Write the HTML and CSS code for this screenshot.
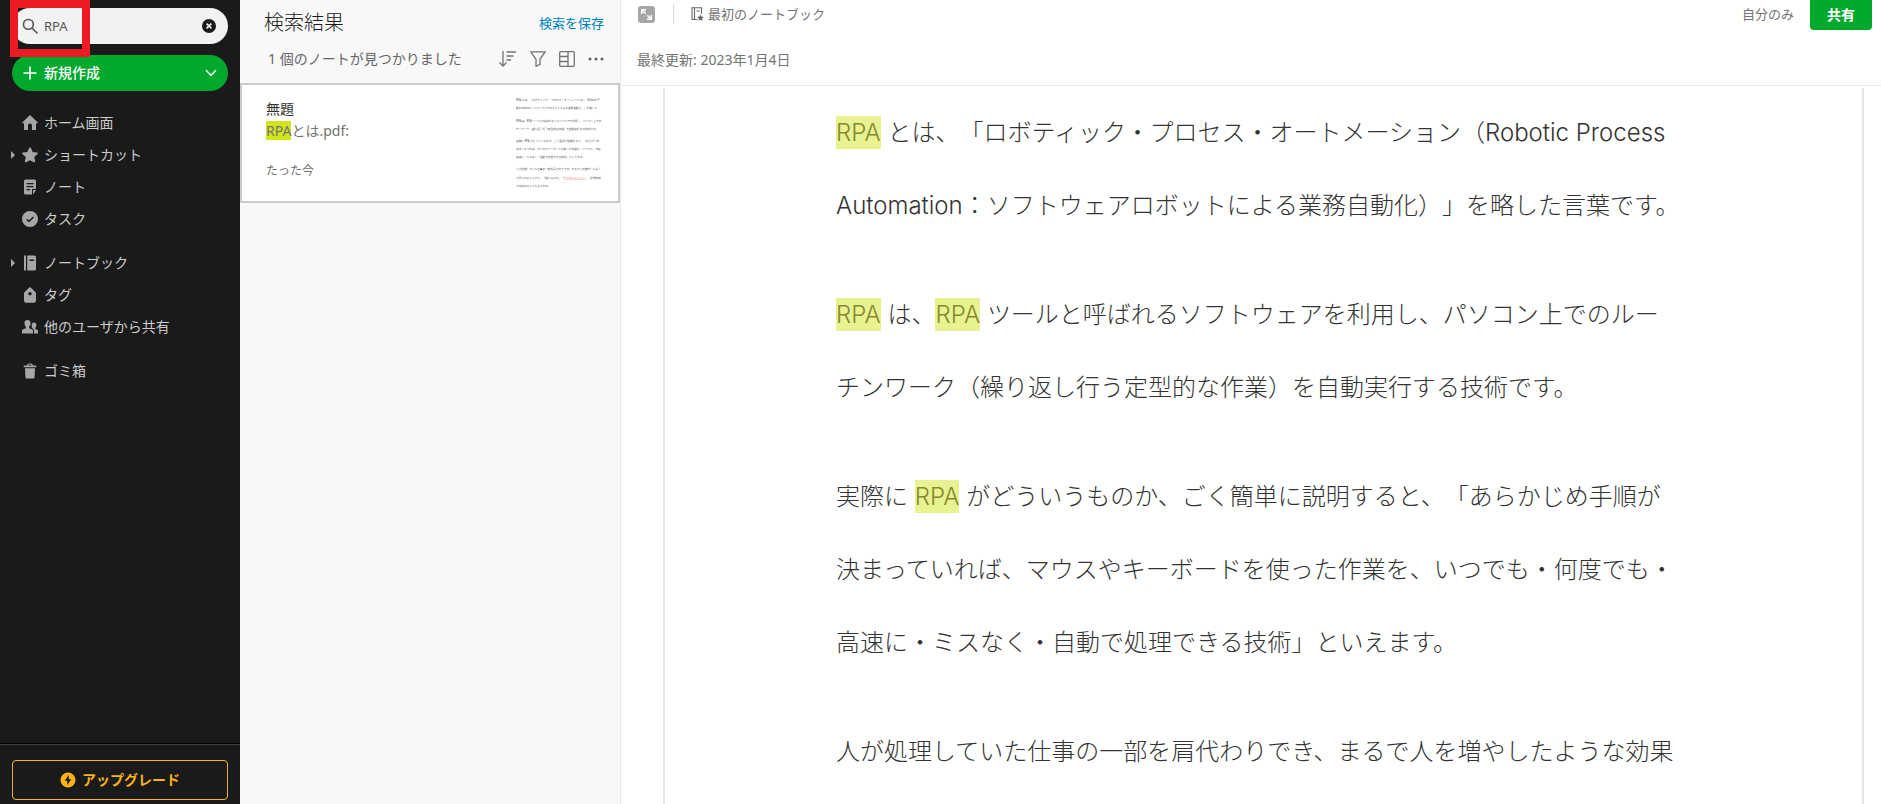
FILE: index.html
```html
<!DOCTYPE html>
<html lang="ja">
<head>
<meta charset="utf-8">
<title>検索結果</title>
<link rel="stylesheet" href="styles.css">
</head>
<body>
<div class="app">
  <aside class="sidebar">
    <div class="search">
      <svg class="search-icon" viewBox="0 0 16 16" width="16" height="16" fill="none" stroke="#555" stroke-width="1.6" stroke-linecap="round"><circle cx="6.4" cy="6.4" r="4.9"/><path d="M10 10l5 5"/></svg>
      <input class="search-input" type="text" value="RPA" aria-label="検索">
      <button class="search-clear" type="button" aria-label="クリア"><svg viewBox="0 0 14 14" width="14" height="14"><circle cx="7" cy="7" r="7" fill="#1a1a1a"/><path d="M4.6 4.6l4.8 4.8M9.4 4.6L4.6 9.4" stroke="#f2f2f2" stroke-width="1.6"/></svg></button>
      <div class="marker"></div>
    </div>
    <button class="new-button" type="button">
      <svg viewBox="0 0 14 14" width="14" height="14" stroke="#fff" stroke-width="1.7"><path d="M7 .5v13M.5 7h13"/></svg>
      <span class="new-label">新規作成</span>
      <svg viewBox="0 0 12 8" width="12" height="8" fill="none" stroke="#fff" stroke-width="1.5"><path d="M1 1.2l5 5 5-5"/></svg>
    </button>
    <nav class="nav">
      <div class="nav-group">
        <a class="nav-item" href="#"><span class="caret"></span><svg class="nav-icon" viewBox="0 0 16 16"><path d="M8 0L.2 7.4c-.3.4-.1.8.3.8H2V14.400c0 .4.2.6.6.6H6v-4.500a2 2 0 0 1 4 0V15h3.400c.4 0 .6-.2.6-.6V8.200h1.500c.4 0 .6-.4.3-.8z"/></svg>ホーム画面</a>
        <a class="nav-item" href="#"><span class="caret caret-on"></span><svg class="nav-icon" viewBox="0 0 16 16"><path stroke="#a6a6a6" stroke-width="1.6" stroke-linejoin="round" d="M8 1.200l2.100 4.500 4.900.6-3.600 3.400.9 4.900L8 12.200l-4.300 2.400.9-4.900L1 6.300l4.900-.6z"/></svg>ショートカット</a>
        <a class="nav-item" href="#"><span class="caret"></span><svg class="nav-icon" viewBox="0 0 16 16"><path fill-rule="evenodd" d="M3.500.5h9A1.500 1.500 0 0 1 14 2v8h-4v5.500H3.500A1.500 1.500 0 0 1 2 14V2A1.500 1.500 0 0 1 3.500.5zM4.500 4v1.200h7V4zm0 3v1.200h7V7zm0 3v1.200h3.500V10z"/><path d="M11 11h3l-3 4.500z"/></svg>ノート</a>
        <a class="nav-item" href="#"><span class="caret"></span><svg class="nav-icon" viewBox="0 0 16 16"><circle cx="8" cy="8" r="8"/><path d="M4.700 8.200l2.300 2.300 4.400-4.600" fill="none" stroke="#1a1a1a" stroke-width="1.500"/></svg>タスク</a>
      </div>
      <div class="nav-group">
        <a class="nav-item" href="#"><span class="caret caret-on"></span><svg class="nav-icon" viewBox="0 0 16 16"><path d="M2 .5h2v15H2z"/><path fill-rule="evenodd" d="M5.200.5h7.300A1.500 1.500 0 0 1 14 2v12a1.500 1.500 0 0 1-1.500 1.500H5.200zM7.500 4.500V6h4.500V4.500z"/></svg>ノートブック</a>
        <a class="nav-item" href="#"><span class="caret"></span><svg class="nav-icon" viewBox="0 0 16 16"><path fill-rule="evenodd" d="M7 .7a1.500 1.500 0 0 1 2 0l4.300 4.200c.4.400.7 1 .7 1.600v7.200a2 2 0 0 1-2 2H4a2 2 0 0 1-2-2V6.500c0-.6.300-1.200.7-1.600zM8 5a1.700 1.700 0 1 0 0 3.400A1.700 1.700 0 0 0 8 5z"/></svg>タグ</a>
        <a class="nav-item" href="#"><span class="caret"></span><svg class="nav-icon" viewBox="0 0 16 16"><path d="M5.500 1a3 3.200 0 0 1 3 3.300c0 1.500-.6 2.800-1.300 3.500v1.400l3 1.200c.6.300.8.800.8 1.400V14.500H0v-2.700c0-.6.300-1.100.8-1.400l3-1.200V7.800C3 7.100 2.500 5.800 2.500 4.300A3 3.200 0 0 1 5.500 1z"/><path d="M12 3.500a2.400 2.600 0 0 1 2.400 2.600c0 1.200-.5 2.200-1.100 2.800v1.100l2.200 1c.4.200.5.600.5 1v2.500h-4v-3c0-.9-.4-1.600-1.200-2L9.700 9c-.1-.4.1-.8.4-1.100-.3-.6-.5-1.200-.5-1.800A2.400 2.600 0 0 1 12 3.500z"/></svg>他のユーザから共有</a>
      </div>
      <div class="nav-group">
        <a class="nav-item" href="#"><span class="caret"></span><svg class="nav-icon" viewBox="0 0 16 16"><path fill-rule="evenodd" d="M5 2.500C5 1 6 .4 8 .4s3 .6 3 2.100h3.300v1.700H1.700V2.500zM6.400 2.500h3.200c0-.6-.6-.9-1.600-.9s-1.600.3-1.600.9z"/><path d="M3 5.200h10l-.4 9a1.500 1.500 0 0 1-1.500 1.300H4.900a1.500 1.500 0 0 1-1.500-1.300z"/></svg>ゴミ箱</a>
      </div>
    </nav>
    <div class="sidebar-footer">
      <button class="upgrade" type="button"><svg viewBox="0 0 16 16" width="16" height="16"><circle cx="8" cy="8" r="7.500" fill="#fcb116"/><path d="M8.800 3L4.700 8.800h2.600V13l4-5.800H8.800z" fill="#1a1a1a"/></svg>アップグレード</button>
    </div>
  </aside>

  <section class="results">
    <header class="results-head">
      <div class="results-row">
        <h1 class="results-title">検索結果</h1>
        <a class="save-link" href="#">検索を保存</a>
      </div>
      <div class="results-row">
        <p class="results-count">1 個のノートが見つかりました</p>
        <div class="tools">
          <button class="tool" type="button" aria-label="並べ替え"><svg viewBox="0 0 18 16" width="18" height="16"><path d="M4 0v15M.5 11.500L4 15l3.500-3.500M7.500 1H17M7.500 5h7M7.500 9h4.500"/></svg></button>
          <button class="tool" type="button" aria-label="フィルタ"><svg viewBox="0 0 16 16" width="16" height="16"><path d="M.8.8h14.400L10 8.300v5l-4 2v-7z"/></svg></button>
          <button class="tool" type="button" aria-label="表示"><svg viewBox="0 0 16 16" width="16" height="16"><rect x=".7" y=".7" width="14.600" height="14.600" rx="1"/><path d="M9 1v14M1 5.500h8M1 10.500h8"/></svg></button>
          <button class="tool" type="button" aria-label="その他"><svg viewBox="0 0 16 16" width="16" height="16"><g fill="#666" stroke="none"><circle cx="2" cy="8" r="1.600"/><circle cx="8" cy="8" r="1.600"/><circle cx="14" cy="8" r="1.600"/></g></svg></button>
        </div>
      </div>
    </header>
    <article class="card">
      <div class="card-text">
        <h2 class="card-title">無題</h2>
        <p class="card-snippet"><mark class="card-mark">RPA</mark>とは.pdf:</p>
        <p class="card-time">たった今</p>
      </div>
      <svg class="thumb" viewBox="0 0 792 855" width="88" height="95" aria-hidden="true">
        <text x="0" y="39">RPA とは、「ロボティック・プロセス・オートメーション（Robotic P</text>
        <text x="0" y="112">Automation：ソフトウェアロボットによる業務自動化）」を略した</text>
        <text x="0" y="221">RPA は、RPA ツールと呼ばれるソフトウェアを利用し、パソコン上での</text>
        <text x="0" y="294">チンワーク（繰り返し行う定型的な作業）を自動実行する技術です。</text>
        <text x="0" y="406">実際に RPA がどういうものか、ごく簡単に説明すると、「あらかじめ</text>
        <text x="0" y="479">決まっていれば、マウスやキーボードを使った作業を、いつでも・何度</text>
        <text x="0" y="552">高速に・ミスなく・自動で処理できる技術」といえます。</text>
        <text x="0" y="661">人が処理していた仕事の一部を肩代わりでき、まるで人を増やしたよう</text>
        <text x="0" y="734">が得られることから、「動けるロボ」「<tspan class="thumb-link">デジタルレイバー</tspan>」（仮想知的</text>
        <text x="0" y="807">で呼ばれることもあります。</text>
      </svg>
    </article>
  </section>

  <main class="editor">
    <header class="editor-head">
      <div class="editor-bar">
        <button class="expand" type="button" aria-label="展開"><svg viewBox="0 0 17 17" width="17" height="17"><rect width="17" height="17" rx="3" fill="#a6a6a6"/><g fill="none" stroke="#fff" stroke-width="1.500"><path d="M3.700 8V3.700H8M3.900 3.900l3.800 3.800M13.300 9v4.300H9M13.100 13.100L9.300 9.300"/></g></svg></button>
        <span class="divider"></span>
        <a class="notebook" href="#"><svg viewBox="0 0 13 14" width="13" height="14"><path d="M6.500 12.500H1V.8h9.500v6M3.500.8v11.700M5.500 4h3" fill="none" stroke="#666" stroke-width="1.100"/><path d="M9.500 7.500l1 2.100 2.300.3-1.700 1.600.4 2.300-2-1.100-2 1.100.4-2.300-1.700-1.600 2.300-.3z" fill="#666"/></svg>最初のノートブック</a>
        <span class="access">自分のみ</span>
      </div>
      <button class="share" type="button">共有</button>
      <p class="updated">最終更新: 2023年1月4日</p>
    </header>
    <div class="page">
      <p class="para"><mark class="hit">RPA</mark> とは、「ロボティック・プロセス・オートメーション（Robotic Process<br>Automation：ソフトウェアロボットによる業務自動化）」を略した言葉です。</p>
      <p class="para"><mark class="hit">RPA</mark> は、<mark class="hit">RPA</mark> ツールと呼ばれるソフトウェアを利用し、パソコン上でのルー<br>チンワーク（繰り返し行う定型的な作業）を自動実行する技術です。</p>
      <p class="para">実際に <mark class="hit">RPA</mark> がどういうものか、ごく簡単に説明すると、「あらかじめ手順が<br>決まっていれば、マウスやキーボードを使った作業を、いつでも・何度でも・<br>高速に・ミスなく・自動で処理できる技術」といえます。</p>
      <p class="para">人が処理していた仕事の一部を肩代わりでき、まるで人を増やしたような効果</p>
    </div>
  </main>
</div>
</body>
</html>
```
FILE: styles.css
```css
* { box-sizing: border-box; }
body, h1, h2, p { margin: 0; }
body {
  font-family: "Noto Sans", "Noto Sans CJK JP", sans-serif;
  font-size: 14px;
  line-height: 20px;
  color: #333;
  text-spacing-trim: space-all;
}
button { font: inherit; border: 0; padding: 0; background: none; }
a { color: inherit; text-decoration: none; }
svg { display: block; flex: none; }

.app { display: flex; height: 100vh; overflow: hidden; }

.sidebar {
  display: flex;
  flex-direction: column;
  flex: none;
  width: 240px;
  padding-top: 8px;
  background: #1a1a1a;
}
.search {
  position: relative;
  display: flex;
  align-items: center;
  height: 36px;
  margin: 0 12px;
  padding: 0 12px 0 10px;
  border-radius: 18px;
  background: #f2f2f2;
}
.search-input {
  flex: 1;
  min-width: 0;
  margin-left: 6px;
  padding: 0;
  border: 0;
  background: none;
  font: inherit;
  font-size: 13px;
  color: #555;
}
.marker {
  position: absolute;
  top: -8px;
  left: -2px;
  width: 80px;
  height: 57px;
  border: 8px solid #ed1c24;
  pointer-events: none;
}
.new-button {
  display: flex;
  align-items: center;
  gap: 7px;
  height: 36px;
  margin: 11px 12px 0;
  padding: 0 11px;
  border-radius: 18px;
  background: #00a82d;
  color: #fff;
  font-weight: 500;
}
.new-label { flex: 1; text-align: left; }

.nav { flex: 1; display: flex; flex-direction: column; gap: 12px; margin-top: 16px; }
.nav-item {
  display: flex;
  align-items: center;
  height: 32px;
  padding-left: 11px;
  color: #ccc;
}
.nav-icon { width: 16px; height: 16px; margin-right: 6px; fill: #a6a6a6; }
.caret {
  margin-right: 7px;
  border: 4px solid transparent;
  border-right: 0;
}
.caret-on { border-left-color: #a6a6a6; }

.sidebar-footer {
  padding: 16px 12px 4px;
  border-top: 1px solid #000;
  box-shadow: inset 0 1px #404040;
}
.upgrade {
  display: flex;
  align-items: center;
  justify-content: center;
  gap: 6px;
  width: 100%;
  height: 40px;
  border: 1px solid #fcb116;
  border-radius: 4px;
  color: #fcb116;
  font-weight: 700;
}

.results { flex: none; width: 381px; border-right: 1px solid #e6e6e6; background: #f8f8f8; }
.results-head {
  display: flex;
  flex-direction: column;
  height: 83px;
  padding: 8px 16px 0 24px;
  gap: 6px;
}
.results-row { display: flex; align-items: center; justify-content: space-between; height: 30px; }
.results-title { font-size: 20px; line-height: 28px; font-weight: 300; color: #1a1a1a; }
.save-link { font-size: 13px; color: #0081c2; }
.results-count { padding-left: 4px; color: #666; }
.tools { display: flex; gap: 13px; }
.tool svg { fill: none; stroke: #737373; stroke-width: 1.3; }

.card {
  display: flex;
  justify-content: space-between;
  height: 120px;
  padding: 12px 14px 0 24px;
  border: 2px solid #ccc;
  background: #fff;
}
.card-title { font-size: 14px; line-height: 24px; font-weight: 400; }
.card-snippet { line-height: 20px; color: #737373; }
.card-mark { background: #d2e41c; color: inherit; }
.card-time { margin-top: 20px; font-size: 12px; color: #737373; }
.thumb text { font-size: 24px; fill: #555; }
.thumb .thumb-link { fill: #e8604c; text-decoration: underline; }

.editor { flex: 1; min-width: 0; display: flex; flex-direction: column; background: #fff; }
.editor-head {
  flex: none;
  display: grid;
  grid-template-columns: 1fr auto;
  align-content: start;
  height: 86px;
  padding: 0 9px 0 16px;
  border-bottom: 1px solid #ebebeb;
  color: #737373;
}
.editor-bar {
  display: flex;
  align-items: center;
  height: 28px;
  padding-left: 1px;
  font-size: 13px;
}
.divider { width: 1px; height: 20px; margin: 0 17px 0 18px; background: #d9d9d9; }
.notebook { display: flex; align-items: center; gap: 4px; }
.access { margin-left: auto; }
.share {
  width: 62px;
  height: 30px;
  margin-left: 16px;
  border-radius: 0 0 4px 4px;
  background: #00a82d;
  color: #fff;
  font-weight: 700;
}
.updated { padding-top: 20px; }
.page {
  flex: 1;
  min-height: 0;
  margin: 2px 17px 0 42px;
  padding: 8px 0 0 171px;
  border: solid #e6e6e6;
  border-width: 0 2px;
  overflow: hidden;
  font-family: Inter, "Noto Sans CJK JP", sans-serif;
  font-size: 24px;
  font-weight: 300;
  line-height: 73px;
  white-space: nowrap;
}
.para { margin-bottom: 36px; }
.hit { padding: 2px 0; background: #e9f291; color: #84892f; }
```
